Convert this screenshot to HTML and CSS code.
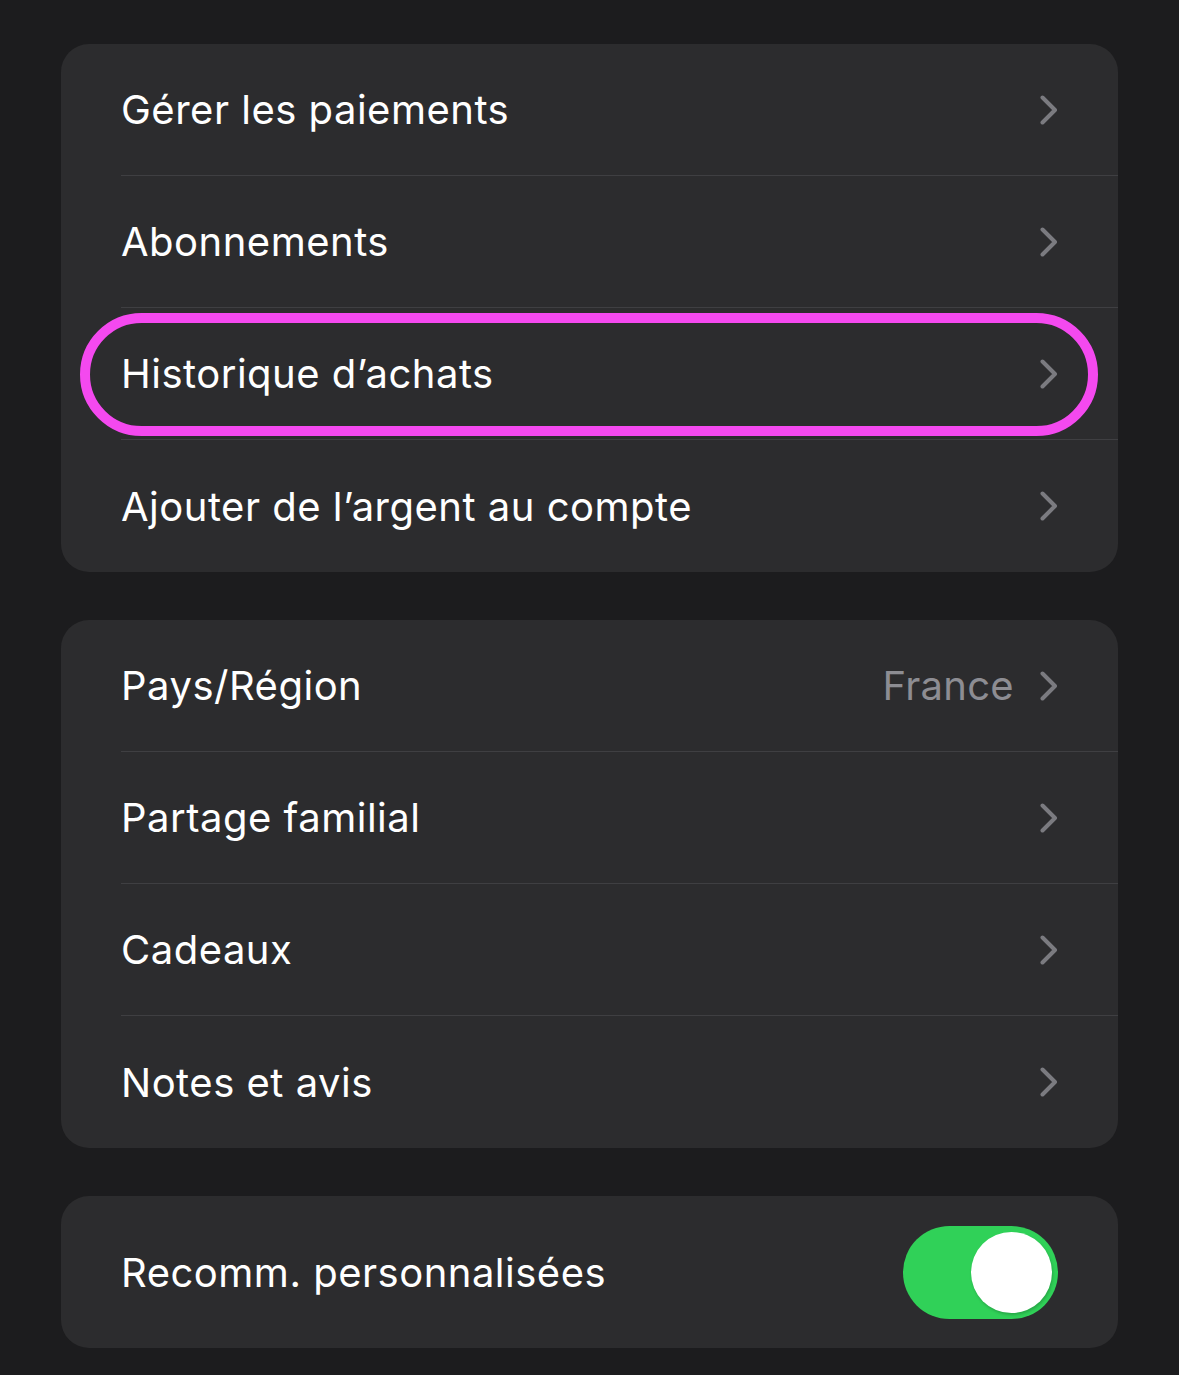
FILE: index.html
```html
<!DOCTYPE html>
<html lang="fr">
<head>
<meta charset="utf-8">
<link rel="stylesheet" href="styles.css">
</head>
<body>
<div class="page">
  <div class="card">
    <div class="row"><span class="label">Gérer les paiements</span><span class="trail"><svg class="chev" viewBox="0 0 18 30"><path d="M2.5 2.5 L15 15 L2.5 27.5"/></svg></span></div>
    <div class="row"><span class="label">Abonnements</span><span class="trail"><svg class="chev" viewBox="0 0 18 30"><path d="M2.5 2.5 L15 15 L2.5 27.5"/></svg></span></div>
    <div class="row highlighted"><span class="label">Historique d’achats</span><span class="trail"><svg class="chev" viewBox="0 0 18 30"><path d="M2.5 2.5 L15 15 L2.5 27.5"/></svg></span><span class="ring"></span></div>
    <div class="row last"><span class="label">Ajouter de l’argent au compte</span><span class="trail"><svg class="chev" viewBox="0 0 18 30"><path d="M2.5 2.5 L15 15 L2.5 27.5"/></svg></span></div>
  </div>
  <div class="card">
    <div class="row"><span class="label">Pays/Région</span><span class="trail"><span class="value">France</span><svg class="chev" viewBox="0 0 18 30"><path d="M2.5 2.5 L15 15 L2.5 27.5"/></svg></span></div>
    <div class="row"><span class="label">Partage familial</span><span class="trail"><svg class="chev" viewBox="0 0 18 30"><path d="M2.5 2.5 L15 15 L2.5 27.5"/></svg></span></div>
    <div class="row"><span class="label">Cadeaux</span><span class="trail"><svg class="chev" viewBox="0 0 18 30"><path d="M2.5 2.5 L15 15 L2.5 27.5"/></svg></span></div>
    <div class="row last"><span class="label">Notes et avis</span><span class="trail"><svg class="chev" viewBox="0 0 18 30"><path d="M2.5 2.5 L15 15 L2.5 27.5"/></svg></span></div>
  </div>
  <div class="card">
    <div class="row toggle-row last"><span class="label">Recomm. personnalisées</span><span class="switch"><span class="knob"></span></span></div>
  </div>
</div>
</body>
</html>
```
FILE: styles.css
```css
html, body {
  margin: 0;
  padding: 0;
  background: #1c1c1e;
}
body {
  font-family: Inter, "Noto Sans", "Liberation Sans", sans-serif;
  color: #ffffff;
}
.page {
  padding: 44px 61px 0 61px;
  display: flex;
  flex-direction: column;
  gap: 48px;
}
.card {
  background: #2c2c2e;
  border-radius: 28px;
  overflow: hidden;
}
.row {
  position: relative;
  height: 132px;
  margin-left: 60px;
  padding-right: 60px;
  display: flex;
  align-items: center;
  justify-content: space-between;
  box-sizing: border-box;
  border-bottom: 1px solid #3f3f42;
}
.row.last {
  border-bottom: none;
}
.label {
  font-size: 40px;
  letter-spacing: 0.5px;
  color: #ffffff;
}
.trail {
  display: flex;
  align-items: center;
  gap: 26px;
}
.value {
  font-size: 40px;
  letter-spacing: 0.3px;
  color: #8d8d93;
}
.chev {
  width: 18px;
  height: 30px;
  fill: none;
  stroke: #7b7b80;
  stroke-width: 4;
  stroke-linecap: round;
  stroke-linejoin: round;
}
.ring {
  position: absolute;
  left: -41px;
  right: 20px;
  top: 5px;
  bottom: 3px;
  border: 10px solid #f449ef;
  border-radius: 70px;
  pointer-events: none;
}
.toggle-row {
  height: 152px;
}
.switch {
  width: 155px;
  height: 93px;
  border-radius: 47px;
  background: #30d158;
  position: relative;
  box-sizing: border-box;
}
.knob {
  position: absolute;
  right: 6px;
  top: 6px;
  width: 81px;
  height: 81px;
  border-radius: 50%;
  background: #ffffff;
  box-shadow: 1px 2px 3px rgba(0,0,0,0.2);
}
```
